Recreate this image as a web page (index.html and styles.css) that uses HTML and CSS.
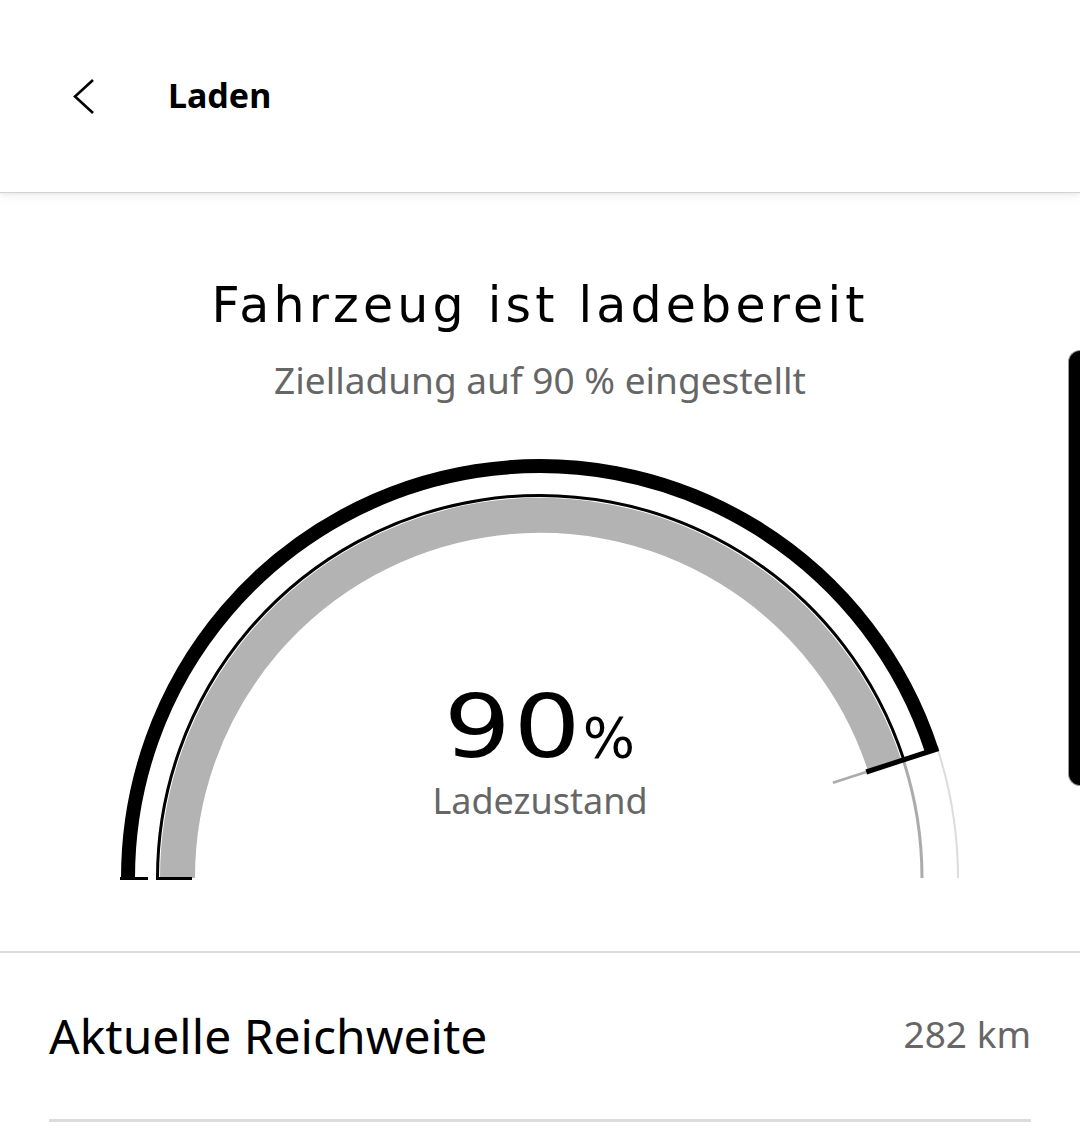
FILE: index.html
```html
<!DOCTYPE html>
<html lang="de">
<head>
<meta charset="utf-8">
<title>Laden</title>
<link rel="stylesheet" href="styles.css">
</head>
<body>
<header class="topbar">
  <svg class="back" width="24" height="40" viewBox="0 0 24 40" aria-hidden="true">
    <path d="M21 4 L3 20.5 L21 37" fill="none" stroke="#000" stroke-width="2.6" stroke-linecap="butt" stroke-linejoin="miter"/>
  </svg>
  <h1 class="page-title">Laden</h1>
</header>

<main class="content">
  <h2 class="status">Fahrzeug ist ladebereit</h2>
  <p class="target">Zielladung auf 90 % eingestellt</p>

  <div class="gauge">
    <svg class="gauge-svg" width="1080" height="460" viewBox="0 440 1080 460" aria-hidden="true">
      <!-- remaining track -->
      <path d="M937.5 748.8 A418 418 0 0 1 958 878" fill="none" stroke="#dcdcdc" stroke-width="2"/>
      <path d="M903.3 760 A382 382 0 0 1 922 878" fill="none" stroke="#ababab" stroke-width="3"/>
      <!-- charge band -->
      <path d="M177.5 878 A362.5 362.5 0 0 1 884.8 766" fill="none" stroke="#b3b3b3" stroke-width="35"/>
      <!-- thin edge -->
      <path d="M157.5 878 A382.5 382.5 0 0 1 903.8 759.8" fill="none" stroke="#000" stroke-width="3"/>
      <!-- outer target arc -->
      <path d="M128 878 A412 412 0 0 1 931.8 750.7" fill="none" stroke="#000" stroke-width="14"/>
      <!-- end cap -->
      <path d="M866.2 772 L938.5 748.5" fill="none" stroke="#000" stroke-width="5"/>
      <!-- target tick -->
      <path d="M832.9 782.8 L866.2 772" fill="none" stroke="#ababab" stroke-width="2.5"/>
      <!-- left feet -->
      <path d="M120 878.5 H148" fill="none" stroke="#000" stroke-width="3"/>
      <path d="M156 878.5 H192" fill="none" stroke="#000" stroke-width="3"/>
    </svg>
    <div class="gauge-label">
      <div class="soc"><span class="soc-num">90</span><span class="soc-unit">%</span></div>
      <div class="soc-caption">Ladezustand</div>
    </div>
  </div>

  <div class="divider"></div>

  <div class="row">
    <span class="row-label">Aktuelle Reichweite</span>
    <span class="row-value">282 km</span>
  </div>
  <div class="row-line"></div>
</main>

<div class="scroll-thumb"></div>
</body>
</html>
```

FILE: styles.css
```css
html, body {
  margin: 0;
  padding: 0;
  background: #fff;
}

body {
  width: 1080px;
  height: 1134px;
  overflow: hidden;
  position: relative;
  font-family: "Noto Sans", "Open Sans", sans-serif;
  color: #000;
}

.topbar {
  position: relative;
  z-index: 2;
  height: 192px;
  display: flex;
  align-items: center;
  padding-left: 72px;
  background: #fff;
  box-shadow: 0 1px 0 #d2d2d2, 0 2px 4px rgba(0, 0, 0, 0.08), 0 6px 12px rgba(0, 0, 0, 0.04);
}

.back {
  display: block;
  flex: none;
}

.page-title {
  margin: -3px 0 0 72px;
  font-family: "Noto Sans", sans-serif;
  font-weight: 700;
  font-size: 34px;
  line-height: 40px;
}

.content {
  display: flex;
  flex-direction: column;
}

.status {
  margin: 84px 0 0;
  text-align: center;
  font-family: "DejaVu Sans", sans-serif;
  font-weight: 400;
  font-size: 49px;
  line-height: 60px;
  letter-spacing: 4.2px;
}

.target {
  margin: 20px 0 0;
  text-align: center;
  font-size: 37px;
  line-height: 48px;
  color: #666;
}

.gauge {
  position: relative;
  margin-top: 36px;
  height: 460px;
}

.gauge-svg {
  display: block;
}

.gauge-label {
  position: absolute;
  left: 0;
  right: 0;
  top: 243px;
  text-align: center;
}

.soc {
  display: flex;
  justify-content: center;
  align-items: baseline;
  height: 88px;
  padding-left: 22px;
}

.soc-num {
  display: inline-block;
  font-family: "DejaVu Sans", sans-serif;
  font-size: 88px;
  line-height: 88px;
  letter-spacing: 2px;
  transform: scaleX(1.2);
  transform-origin: right center;
}

.soc-unit {
  font-family: "DejaVu Sans", sans-serif;
  font-size: 55px;
  line-height: 88px;
}

.soc-caption {
  margin-top: 6px;
  font-size: 36px;
  line-height: 48px;
  color: #666;
}

.divider {
  margin-top: 51px;
  height: 2px;
  background: #dcdcdc;
}

.row {
  display: flex;
  justify-content: space-between;
  align-items: center;
  padding: 50px 49px 50px;
}

.row-label {
  font-size: 48px;
  line-height: 66px;
}

.row-value {
  font-size: 37px;
  line-height: 48px;
  margin-top: -4px;
  color: #666;
}

.row-line {
  margin: 0 49px;
  height: 3px;
  background: #dcdcdc;
}

.scroll-thumb {
  position: absolute;
  right: 0;
  top: 350px;
  width: 11px;
  height: 434px;
  background: #000;
  border: 1px solid #9a9a9a;
  border-right: 0;
  border-radius: 12px 0 0 12px;
}
```
